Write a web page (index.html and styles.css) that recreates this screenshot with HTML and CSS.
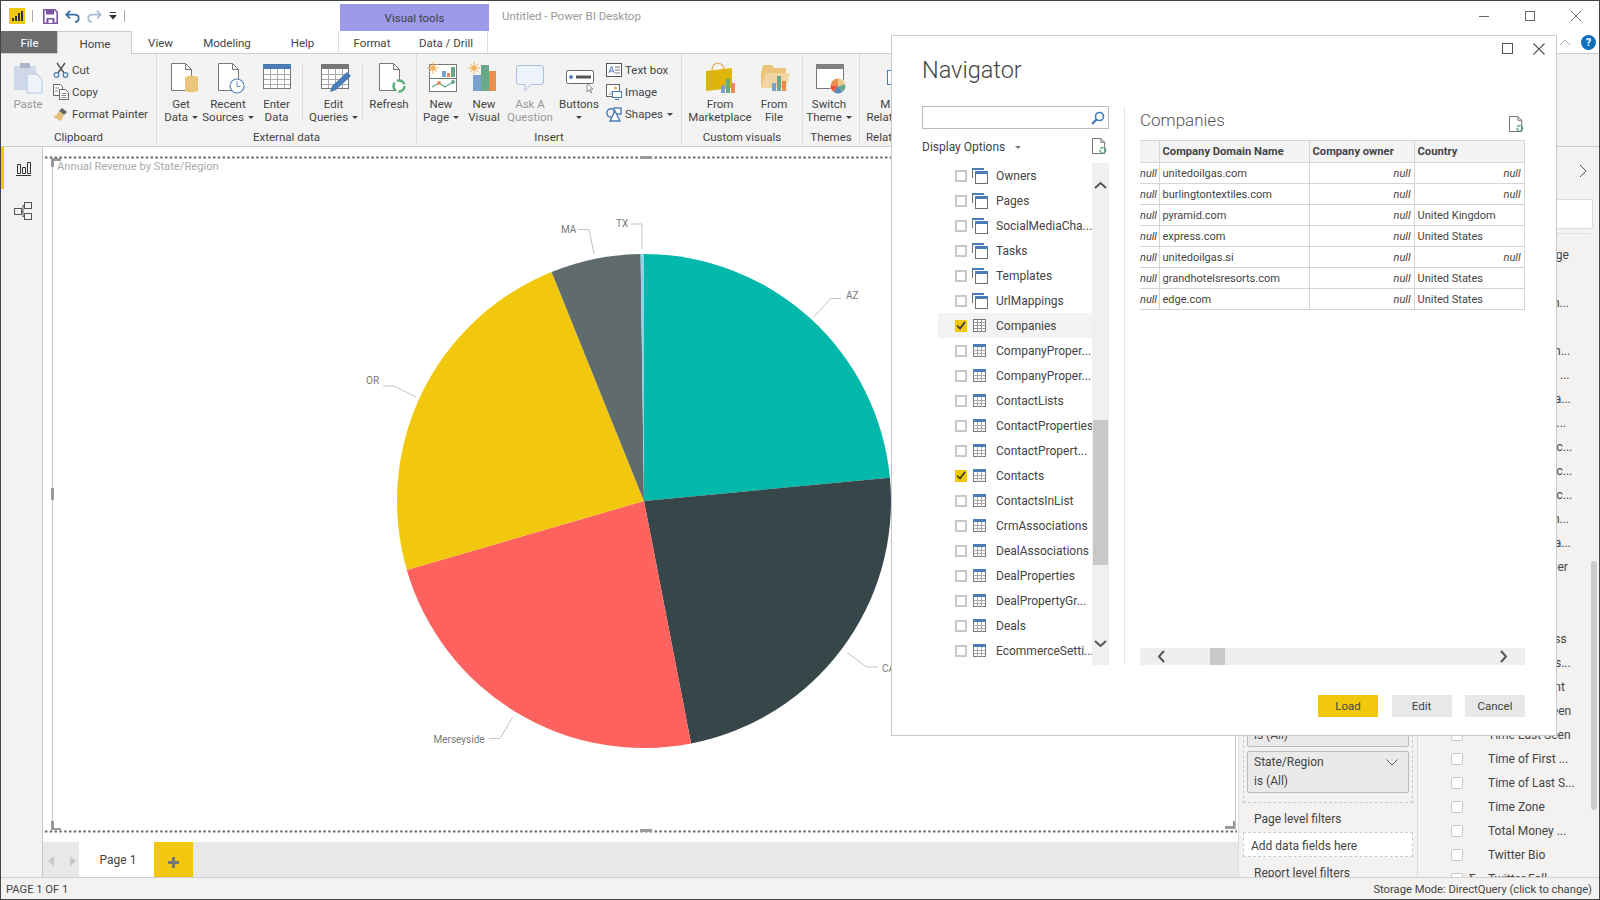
FILE: index.html
```html
<!DOCTYPE html>
<html lang="en">

<head>
    <meta charset="UTF-8">
    <title>Untitled - Power BI Desktop</title>
    <link rel="stylesheet" href="styles.css">
</head>

<body>
    <!-- shared small icons -->
    <svg class="sprite" width="0" height="0">
        <symbol id="ico-view" viewBox="0 0 16 16">
            <path d="M.5 10V.5h11" fill="none" stroke="#6d6d6d"/>
            <rect x="0" y="0" width="12" height="2" fill="#4a7db5"/>
            <rect x="3.5" y="3.5" width="12" height="12" fill="#fff" stroke="#6d6d6d"/>
            <rect x="3" y="3" width="13" height="3" fill="#4a7db5"/>
        </symbol>
        <symbol id="ico-table" viewBox="0 0 13 13">
            <rect x=".5" y=".5" width="12" height="12" fill="#fff" stroke="#777"/>
            <rect x="0" y="0" width="13" height="3" fill="#4a7db5"/>
            <path d="M.5 6.5h12M.5 9.5h12M4.5 3v10M8.5 3v10" stroke="#aaa" fill="none"/>
        </symbol>
        <symbol id="ico-table-sel" viewBox="0 0 13 13">
            <rect x=".5" y=".5" width="12" height="12" fill="#fff" stroke="#777"/>
            <path d="M.5 3.5h12M.5 6.5h12M.5 9.5h12M4.5 1v12M8.5 1v12" stroke="#999" fill="none"/>
        </symbol>
        <symbol id="ico-docrefresh" viewBox="0 0 16 18">
            <path d="M.5.5h9l4 4v12h-13z M9.5.5v4h4" fill="#fff" stroke="#666"/>
            <circle cx="11.5" cy="13" r="3" fill="none" stroke="#5bab7d" stroke-width="1.6" stroke-dasharray="4 1.4"/>
        </symbol>
        <symbol id="ico-doc" viewBox="0 0 32 34">
            <path d="M6.5 2.5h14l6 6v21h-20z M20.5 2.5v6h6" fill="#fff" stroke="#777"/>
        </symbol>
        <symbol id="ico-sun" viewBox="0 0 12 12">
            <circle cx="6" cy="6" r="2.6" fill="#eeb45f"/>
            <path d="M6 0v12M0 6h12M1.8 1.8l8.4 8.4M10.2 1.8l-8.4 8.4" stroke="#eeb45f"/>
        </symbol>
    </svg>

    <div class="window">
        <div class="titlebar">
            <div class="qat">
                <svg class="logo" width="16" height="16" viewBox="0 0 16 16">
                    <rect width="16" height="16" fill="#f2c80f"/>
                    <path d="M3 10h2v3H3zM6 8h2v5H6zM9 5h2v8H9zM12 3h2v10h-2z" fill="#333"/>
                </svg>
                <span class="qat-sep"></span>
                <svg width="15" height="15" viewBox="0 0 15 15">
                    <path d="M.8.8h11l2.4 2.4v11H.8z" fill="#fff" stroke="#7d55a5" stroke-width="1.6"/>
                    <path d="M3 1h8v4.500H3zM3.500 9h8v5h-8z" fill="#7d55a5"/>
                    <path d="M5.500 10.500h4V14h-4z" fill="#fff"/>
                </svg>
                <svg class="qat-arrow" width="15" height="13" viewBox="0 0 15 13">
                    <path d="M5 1L1.300 4.700 5 8.400M1.500 4.700h8c5.500 0 5.500 7 .5 7.300" fill="none" stroke="#3a6ea5" stroke-width="1.800"/>
                </svg>
                <svg class="qat-arrow" width="15" height="13" viewBox="0 0 15 13">
                    <path d="M10 1l3.700 3.700L10 8.400M13.500 4.700h-8c-5.500 0-5.500 7-.5 7.300" fill="none" stroke="#a9bdd3" stroke-width="1.800"/>
                </svg>
                <svg class="qat-drop" width="8" height="8" viewBox="0 0 8 8">
                    <path d="M1 0h6v1H1zM0 3h8L4 7.500z" fill="#333"/>
                </svg>
                <span class="qat-sep qat-sep-end"></span>
            </div>
            <div class="ctx-title">Visual tools</div>
            <div class="app-title">Untitled - Power BI Desktop</div>
            <div class="win-ctrls">
                <svg width="12" height="12" viewBox="0 0 12 12"><path d="M1 6.500h10" stroke="#666"/></svg>
                <svg width="12" height="12" viewBox="0 0 12 12"><rect x="1.500" y="1.500" width="9" height="9" fill="none" stroke="#666"/></svg>
                <svg width="12" height="12" viewBox="0 0 12 12"><path d="M1 1l10 10M11 1L1 11" stroke="#666"/></svg>
            </div>
        </div>

        <div class="tabs">
            <div class="tab tab-file">File</div>
            <div class="tab tab-home">Home</div>
            <div class="tab tab-view">View</div>
            <div class="tab tab-modeling">Modeling</div>
            <div class="tab tab-help">Help</div>
            <div class="tab tab-format">Format</div>
            <div class="tab tab-drill">Data / Drill</div>
            <div class="tabs-right">
                <svg width="12" height="8" viewBox="0 0 12 8"><path d="M1 7l5-5 5 5" fill="none" stroke="#aaa"/></svg>
                <div class="help-dot">?</div>
            </div>
        </div>

        <div class="ribbon">
            <div class="group group-clip">
                <div class="group-body">
                    <div class="rb rb-paste rb-off">
                        <svg width="32" height="34" viewBox="0 0 32 34">
                            <path d="M2 5h22v24H2z" fill="#cfd8e8"/>
                            <path d="M8 2h10v5H8z" fill="#a9b4c6"/>
                            <path d="M15 13h10l5 5v14H15z" fill="#eef3fb" stroke="#b8c7dc"/>
                        </svg>
                        <span>Paste</span>
                    </div>
                    <div class="small-col">
                        <div class="rs">
                            <svg width="16" height="16" viewBox="0 0 16 16">
                                <path d="M4 1l7 10M12 1L5 11" stroke="#555" stroke-width="1.400" fill="none"/>
                                <circle cx="3.500" cy="13" r="2.300" fill="none" stroke="#4a7db5" stroke-width="1.200"/>
                                <circle cx="12.500" cy="13" r="2.300" fill="none" stroke="#4a7db5" stroke-width="1.200"/>
                            </svg>
                            <span>Cut</span>
                        </div>
                        <div class="rs">
                            <svg width="16" height="16" viewBox="0 0 16 16">
                                <path d="M.5.500h7l2 2v9h-9z" fill="#fff" stroke="#666"/>
                                <path d="M6.500 5.500h6l3 3v7h-9z" fill="#fff" stroke="#666"/>
                                <path d="M2 4h4M2 7h3M8.500 9.500h5M8.500 11.500h5M8.500 13.500h5" stroke="#888"/>
                            </svg>
                            <span>Copy</span>
                        </div>
                        <div class="rs">
                            <svg width="16" height="16" viewBox="0 0 16 16">
                                <path d="M9 2l5 4-3 3-5-4z" fill="#666"/>
                                <path d="M6 5l5 4-3 6C5 14 2 12 0 10c3 0 5-2 6-5z" fill="#e3bf7c"/>
                            </svg>
                            <span>Format Painter</span>
                        </div>
                    </div>
                </div>
                <div class="group-label">Clipboard</div>
            </div>

            <div class="group group-ext">
                <div class="group-body">
                    <div class="rb w48">
                        <svg width="32" height="34" viewBox="0 0 32 34">
                            <use href="#ico-doc"/>
                            <path d="M20 17c0-3 13-3 13 0v12c0 3-13 3-13 0z" fill="#ecc47c"/>
                        </svg>
                        <span>Get<br>Data <i class="caret"></i></span>
                    </div>
                    <div class="rb w46">
                        <svg width="32" height="34" viewBox="0 0 32 34">
                            <use href="#ico-doc"/>
                            <circle cx="25" cy="25" r="7" fill="#fff" stroke="#5487bd" stroke-width="1.200"/>
                            <path d="M25 20.500V25.500h3.500" fill="none" stroke="#5487bd"/>
                        </svg>
                        <span>Recent<br>Sources <i class="caret"></i></span>
                    </div>
                    <div class="rb w51">
                        <svg width="32" height="34" viewBox="0 0 32 34">
                            <rect x="2.500" y="3.500" width="27" height="24" fill="#fff" stroke="#777"/>
                            <rect x="2" y="3" width="28" height="5" fill="#4a7db5"/>
                            <path d="M3 13.500h26M3 18.500h26M3 23.500h26M9.500 8v19M16.500 8v19M23.500 8v19" stroke="#aaa"/>
                        </svg>
                        <span>Enter<br>Data</span>
                    </div>
                    <span class="rsep"></span>
                    <div class="rb w57">
                        <svg width="32" height="34" viewBox="0 0 32 34">
                            <rect x="3.500" y="3.500" width="27" height="24" fill="#fff" stroke="#777"/>
                            <rect x="3" y="3" width="28" height="5" fill="#777"/>
                            <path d="M4 13.500h26M4 18.500h26M4 23.500h26M10.500 8v19M17.500 8v19M24.500 8v19" stroke="#aaa"/>
                            <path d="M12 31l2-6 15-14 4 4-15 14z" fill="#4a7db5"/>
                        </svg>
                        <span>Edit<br>Queries <i class="caret"></i></span>
                    </div>
                    <span class="rsep"></span>
                    <div class="rb w48">
                        <svg width="32" height="34" viewBox="0 0 32 34">
                            <use href="#ico-doc"/>
                            <circle cx="26" cy="25" r="5.500" fill="#fff" stroke="#5bab7d" stroke-width="2.400" stroke-dasharray="9 2.500"/>
                        </svg>
                        <span>Refresh</span>
                    </div>
                </div>
                <div class="group-label">External data</div>
            </div>

            <div class="group group-ins">
                <div class="group-body">
                    <div class="rb w48">
                        <svg width="32" height="34" viewBox="0 0 32 34">
                            <rect x="4.500" y="3.500" width="27" height="27" fill="#fff" stroke="#777"/>
                            <path d="M4 17.500h28" stroke="#777"/>
                            <path d="M17 10h4v6h-4z" fill="#7aa0cf"/>
                            <path d="M22 12h3v4h-3z" fill="#e98e4d"/>
                            <path d="M26 6h4v10h-4z" fill="#6aa88a"/>
                            <path d="M7 26l7-4 6 4 8-5" fill="none" stroke="#6aa88a" stroke-width="1.400"/>
                            <circle cx="14" cy="22" r="2" fill="#e98e4d"/>
                            <circle cx="28" cy="21" r="2" fill="#6aa88a"/>
                            <use href="#ico-sun" x="2" y="1" width="12" height="12"/>
                        </svg>
                        <span>New<br>Page <i class="caret"></i></span>
                    </div>
                    <div class="rb w38">
                        <svg width="32" height="34" viewBox="0 0 32 34">
                            <use href="#ico-sun" x="0" y="1" width="12" height="12"/>
                            <path d="M5 14h8v16H5z" fill="#7aa0cf"/>
                            <path d="M13 4h8v26h-8z" fill="#6aa88a"/>
                            <path d="M21 10h7v20h-7z" fill="#e98e4d"/>
                        </svg>
                        <span>New<br>Visual</span>
                    </div>
                    <div class="rb w54 rb-off">
                        <svg width="32" height="34" viewBox="0 0 32 34">
                            <path d="M5 4.500h22c1.500 0 2.500 1 2.500 2.500v14c0 1.500-1 2.500-2.500 2.500H17l-6 6v-6H5c-1.500 0-2.500-1-2.500-2.500V7c0-1.500 1-2.500 2.500-2.500z" fill="#eef3fb" stroke="#a9c0dc"/>
                        </svg>
                        <span>Ask A<br>Question</span>
                    </div>
                    <div class="rb w44">
                        <svg width="32" height="34" viewBox="0 0 32 34">
                            <rect x="3.500" y="9.500" width="27" height="13" rx="2" fill="#fff" stroke="#666"/>
                            <circle cx="8" cy="16" r="2" fill="#5487bd"/>
                            <path d="M13 14.500h15v3H13z" fill="#555"/>
                            <path d="M24 22l0 9 2-2 2 3 1-1-2-3 3 0z" fill="#fff" stroke="#777" stroke-width=".8"/>
                        </svg>
                        <span>Buttons<br><i class="caret"></i></span>
                    </div>
                    <div class="small-col small-ins">
                        <div class="rs">
                            <svg width="16" height="14" viewBox="0 0 16 14">
                                <rect x=".5" y=".5" width="15" height="13" fill="#fff" stroke="#555"/>
                                <path d="M3 10l2.500-7L8 10M4 8h3" fill="none" stroke="#4a7db5"/>
                                <path d="M9 4h5M9 7h5M9 10h5" stroke="#777"/>
                            </svg>
                            <span>Text box</span>
                        </div>
                        <div class="rs">
                            <svg width="16" height="16" viewBox="0 0 16 16">
                                <rect x=".5" y=".5" width="13" height="12" fill="#fff" stroke="#666"/>
                                <circle cx="9.500" cy="4" r="1.500" fill="#e9a94f"/>
                                <path d="M2 11l3-4 3 4z" fill="#c3cfdf"/>
                                <rect x="6.500" y="7.500" width="9" height="6" fill="#fff" stroke="#4a7db5"/>
                                <path d="M9 15.500h4" stroke="#4a7db5"/>
                            </svg>
                            <span>Image</span>
                        </div>
                        <div class="rs">
                            <svg width="16" height="15" viewBox="0 0 16 15">
                                <circle cx="5" cy="6" r="4.200" fill="none" stroke="#4a7db5" stroke-width="1.400"/>
                                <rect x="8" y="1" width="7" height="6" fill="#fff" stroke="#4a7db5" stroke-width="1.400"/>
                                <path d="M9 4l5 10H4z" fill="#fff" stroke="#4a7db5" stroke-width="1.400"/>
                            </svg>
                            <span>Shapes <i class="caret"></i></span>
                        </div>
                    </div>
                </div>
                <div class="group-label">Insert</div>
            </div>

            <div class="group group-custom">
                <div class="group-body">
                    <div class="rb w76">
                        <svg width="32" height="34" viewBox="0 0 32 34">
                            <path d="M8 9c0-9 12-9 12 0" fill="none" stroke="#e9a94f" stroke-width="1.200"/>
                            <path d="M2 10l26-3v20l-26 3z" fill="#dcb50d"/>
                            <path d="M17 24h4v8h-4z" fill="#7aa0cf"/>
                            <path d="M22 18h4v14h-4z" fill="#6aa88a"/>
                            <path d="M27 22h4v10h-4z" fill="#e98e4d"/>
                        </svg>
                        <span>From<br>Marketplace</span>
                    </div>
                    <div class="rb w32">
                        <svg width="32" height="34" viewBox="0 0 32 34">
                            <path d="M3 12l2-8h9l2 3h12v20H3z" fill="#ecc47c"/>
                            <path d="M3 27l5-15h24l-4 15z" fill="#f1d6a2"/>
                            <path d="M14 22h4v8h-4z" fill="#7aa0cf"/>
                            <path d="M19 15h4v15h-4z" fill="#6aa88a"/>
                            <path d="M24 20h4v10h-4z" fill="#e98e4d"/>
                        </svg>
                        <span>From<br>File</span>
                    </div>
                </div>
                <div class="group-label">Custom visuals</div>
            </div>

            <div class="group group-themes">
                <div class="group-body">
                    <div class="rb w52">
                        <svg width="32" height="34" viewBox="0 0 32 34">
                            <rect x="3.500" y="3.500" width="27" height="24" fill="#fff" stroke="#777"/>
                            <rect x="3" y="3" width="28" height="5" fill="#808080"/>
                            <circle cx="25" cy="25" r="8" fill="#fff"/>
                            <path d="M25 25l0-7.500a7.500 7.500 0 0 1 7.300 6z" fill="#e9c98c"/>
                            <path d="M25 25l7.300-1.500a7.500 7.500 0 0 1-3 7.500z" fill="#6aa88a"/>
                            <path d="M25 25l4.300 6a7.500 7.500 0 0 1-8.600 0z" fill="#5487bd"/>
                            <path d="M25 25l-4.300 6a7.500 7.500 0 0 1-3.200-6z" fill="#e8553f"/>
                            <path d="M25 25h-7.500a7.500 7.500 0 0 1 7.500-7.500z" fill="#e98e4d"/>
                        </svg>
                        <span>Switch<br>Theme <i class="caret"></i></span>
                    </div>
                </div>
                <div class="group-label">Themes</div>
            </div>

            <div class="group group-rel">
                <div class="group-body">
                    <div class="rb rb-rel">
                        <svg width="32" height="34" viewBox="0 0 32 34">
                            <rect x="2.500" y="9.500" width="14" height="14" fill="#fff" stroke="#4a7db5"/>
                        </svg>
                        <span>Manage<br>Relationships</span>
                    </div>
                </div>
                <div class="group-label group-label-rel">Relationships</div>
            </div>
        </div>

        <div class="main">
            <div class="sidebar">
                <div class="side-item side-active">
                    <svg width="15" height="15" viewBox="0 0 15 15">
                        <path d="M0 14.500h15" stroke="#333"/>
                        <path d="M1.500 3.500h3v9h-3zM6.500 6.500h3v6h-3zM11.500 1.500h3v11h-3z" fill="none" stroke="#333"/>
                    </svg>
                </div>
                <div class="side-item side-model">
                    <svg width="19" height="19" viewBox="0 0 19 19">
                        <rect x="10.500" y=".5" width="7" height="6" fill="none" stroke="#555"/>
                        <rect x=".5" y="6.500" width="7" height="6" fill="none" stroke="#555"/>
                        <rect x="10.500" y="11.500" width="7" height="6" fill="none" stroke="#555"/>
                        <path d="M7.500 9.500h1.500M9 3.500V15M9 3.500h1.500M9 14.500h1.500" stroke="#555" fill="none"/>
                    </svg>
                </div>
            </div>

            <div class="report">
                <div class="canvas">
                    <svg class="chart" viewBox="43 147 1194 695">
                        <path d="M45 157.500H1237M45 831.500H1237" stroke="#666" stroke-width="2" stroke-dasharray="2.400 2.400"/>
                        <path d="M52.500 160V830" stroke="#c4c4c4"/>
                        <path d="M1235.500 160V830" stroke="#c4c4c4"/>
                        <path d="M51 158h10v3h-7v6h-3z M51 821h3v7h7v2h-10z" fill="#999"/>
                        <path d="M1233 821h2v-1h0v9h-10v-3h8z" fill="#999"/>
                        <path d="M640 156h12v3h-12zM640 829h12v3h-12zM51 488h3v12h-3z" fill="#999"/>
                        <text class="vis-title" x="57" y="170">Annual Revenue by State/Region</text>

                        <path d="M644 501L644 254A247 247 0 0 1 889.900 477.800Z" fill="#01b8aa"/>
                        <path d="M644 501L889.900 477.800A247 247 0 0 1 691.100 743.500Z" fill="#374649"/>
                        <path d="M644 501L691.100 743.500A247 247 0 0 1 406.800 569.900Z" fill="#fd625e"/>
                        <path d="M644 501L406.800 569.900A247 247 0 0 1 551.600 272.000Z" fill="#f2c80f"/>
                        <path d="M644 501L551.600 272.000A247 247 0 0 1 640.600 254Z" fill="#5f6b6d"/>
                        <path d="M644 501L640.600 254A247 247 0 0 1 644 254Z" fill="#8ad4eb"/>

                        <g class="leaders">
                            <path d="M841 298.500H830.500L814 317"/>
                            <path d="M383 386H394L416 397"/>
                            <path d="M578 229.500H589L594 254"/>
                            <path d="M631 224H642V249"/>
                            <path d="M489 738.500H500L512.500 717.500"/>
                            <path d="M847 652.500L866.500 667H878"/>
                        </g>
                        <text class="slice-label" x="846" y="299">AZ</text>
                        <text class="slice-label" x="366" y="384">OR</text>
                        <text class="slice-label" x="561" y="233">MA</text>
                        <text class="slice-label" x="616" y="227">TX</text>
                        <text class="slice-label" x="433.500" y="743">Merseyside</text>
                        <text class="slice-label" x="882" y="672">CA</text>
                    </svg>
                </div>
                <div class="pagebar">
                    <div class="page-arrows">
                        <svg width="7" height="10" viewBox="0 0 7 10"><path d="M6 0v10L0 5z" fill="#c8c8c8"/></svg>
                        <svg width="7" height="10" viewBox="0 0 7 10"><path d="M1 0v10l6-5z" fill="#c8c8c8"/></svg>
                    </div>
                    <div class="page-tab">Page 1</div>
                    <div class="page-add">
                        <svg width="11" height="11" viewBox="0 0 11 11"><path d="M4 0h3v4h4v3H7v4H4V7H0V4h4z" fill="#777"/></svg>
                    </div>
                </div>
            </div>

            <div class="side-panes">
                <div class="filters">
                    <div class="filter-wrap">
                        <div class="filter-box">
                            <div>Contact Owner</div>
                            <div>is (All)</div>
                        </div>
                        <div class="filter-box">
                            <div class="filter-name">State/Region
                                <svg width="12" height="7" viewBox="0 0 12 7"><path d="M.5.500L6 6l5.500-5.500" fill="none" stroke="#666"/></svg>
                            </div>
                            <div>is (All)</div>
                        </div>
                    </div>
                    <div class="filter-head">Page level filters</div>
                    <div class="filter-drop">Add data fields here</div>
                    <div class="filter-head">Report level filters</div>
                </div>

                <div class="fields">
                    <div class="fields-head">
                        <svg width="9" height="14" viewBox="0 0 9 14"><path d="M1 1l6 6-6 6" fill="none" stroke="#555"/></svg>
                    </div>
                    <div class="fields-search"></div>
                    <div class="fields-list">
                        <div class="field"><i class="fbox"></i><b></b><span>Lifecycle Stage</span></div>
                        <div class="field"><i class="fbox"></i><b></b><span>Lead Type</span></div>
                        <div class="field"><i class="fbox"></i><b></b><span>Original Chan...</span></div>
                        <div class="field"><i class="fbox"></i><b></b><span>Last Name</span></div>
                        <div class="field"><i class="fbox"></i><b></b><span>Recent Touch...</span></div>
                        <div class="field"><i class="fbox"></i><b></b><span>Recent Sales ...</span></div>
                        <div class="field"><i class="fbox"></i><b></b><span>Revenue Data...</span></div>
                        <div class="field"><i class="fbox"></i><b></b><span>Sales Analyti...</span></div>
                        <div class="field"><i class="fbox"></i><b></b><span>Original Sourc...</span></div>
                        <div class="field"><i class="fbox"></i><b></b><span>Original Sourc...</span></div>
                        <div class="field"><i class="fbox"></i><b></b><span>Original Sourc...</span></div>
                        <div class="field"><i class="fbox"></i><b></b><span>Original Chan...</span></div>
                        <div class="field"><i class="fbox"></i><b></b><span>Revenue Data...</span></div>
                        <div class="field"><i class="fbox"></i><b></b><span>Phone Number</span></div>
                        <div class="field"><i class="fbox"></i><b></b><span>Role</span></div>
                        <div class="field"><i class="fbox"></i><b></b><span>State</span></div>
                        <div class="field"><i class="fbox"></i><b></b><span>Street Address</span></div>
                        <div class="field"><i class="fbox"></i><b></b><span>Subscriptions...</span></div>
                        <div class="field"><i class="fbox"></i><b></b><span>Support Agent</span></div>
                        <div class="field"><i class="fbox"></i><b></b><span>Time First Seen</span></div>
                        <div class="field"><i class="fbox"></i><b></b><span>Time Last Seen</span></div>
                        <div class="field"><i class="fbox"></i><b></b><span>Time of First ...</span></div>
                        <div class="field"><i class="fbox"></i><b></b><span>Time of Last S...</span></div>
                        <div class="field"><i class="fbox"></i><b></b><span>Time Zone</span></div>
                        <div class="field"><i class="fbox"></i><b></b><span>Total Money ...</span></div>
                        <div class="field"><i class="fbox"></i><b></b><span>Twitter Bio</span></div>
                        <div class="field"><i class="fbox"></i><b>&Sigma;</b><span>Twitter Foll...</span></div>
                    </div>
                </div>
                <div class="pane-scroll"><div class="pane-thumb"></div></div>
            </div>
        </div>

        <div class="statusbar">
            <span>PAGE 1 OF 1</span>
            <span>Storage Mode: DirectQuery (click to change)</span>
        </div>
    </div>

    <!-- Navigator dialog -->
    <div class="dialog">
        <div class="dlg-head">
            <h1>Navigator</h1>
            <div class="dlg-ctrls">
                <svg width="11" height="11" viewBox="0 0 11 11"><rect x=".5" y=".5" width="10" height="10" fill="none" stroke="#555"/></svg>
                <svg width="12" height="12" viewBox="0 0 12 12"><path d="M.5.500l11 11M11.500.500l-11 11" stroke="#555" stroke-width="1.100"/></svg>
            </div>
        </div>

        <div class="dlg-body">
            <div class="nav-left">
                <div class="nav-search">
                    <svg width="14" height="14" viewBox="0 0 14 14">
                        <circle cx="8.500" cy="5.500" r="4" fill="none" stroke="#3f7cb5" stroke-width="1.600"/>
                        <path d="M5.500 8.500L1 13" stroke="#3f7cb5" stroke-width="2.200"/>
                    </svg>
                </div>
                <div class="nav-options">
                    <span>Display Options <i class="caret caret-wide"></i></span>
                    <svg width="15" height="17" viewBox="0 0 16 18"><use href="#ico-docrefresh"/></svg>
                </div>
                <div class="nav-tree">
                    <div class="tree-list">
                        <div class="tree-row"><i class="chk"></i><svg width="16" height="16"><use href="#ico-view"/></svg><span>Owners</span></div>
                        <div class="tree-row"><i class="chk"></i><svg width="16" height="16"><use href="#ico-view"/></svg><span>Pages</span></div>
                        <div class="tree-row"><i class="chk"></i><svg width="16" height="16"><use href="#ico-view"/></svg><span>SocialMediaCha...</span></div>
                        <div class="tree-row"><i class="chk"></i><svg width="16" height="16"><use href="#ico-view"/></svg><span>Tasks</span></div>
                        <div class="tree-row"><i class="chk"></i><svg width="16" height="16"><use href="#ico-view"/></svg><span>Templates</span></div>
                        <div class="tree-row"><i class="chk"></i><svg width="16" height="16"><use href="#ico-view"/></svg><span>UrlMappings</span></div>
                        <div class="tree-row row-hl"><i class="chk chk-on"><svg width="10" height="9" viewBox="0 0 10 9"><path d="M1 4.500l3 3 5-6.500" fill="none" stroke="#333" stroke-width="1.600"/></svg></i><svg class="tbl" width="13" height="13"><use href="#ico-table-sel"/></svg><span>Companies</span></div>
                        <div class="tree-row"><i class="chk"></i><svg class="tbl" width="13" height="13"><use href="#ico-table"/></svg><span>CompanyProper...</span></div>
                        <div class="tree-row"><i class="chk"></i><svg class="tbl" width="13" height="13"><use href="#ico-table"/></svg><span>CompanyProper...</span></div>
                        <div class="tree-row"><i class="chk"></i><svg class="tbl" width="13" height="13"><use href="#ico-table"/></svg><span>ContactLists</span></div>
                        <div class="tree-row"><i class="chk"></i><svg class="tbl" width="13" height="13"><use href="#ico-table"/></svg><span>ContactProperties</span></div>
                        <div class="tree-row"><i class="chk"></i><svg class="tbl" width="13" height="13"><use href="#ico-table"/></svg><span>ContactPropert...</span></div>
                        <div class="tree-row"><i class="chk chk-on"><svg width="10" height="9" viewBox="0 0 10 9"><path d="M1 4.500l3 3 5-6.500" fill="none" stroke="#333" stroke-width="1.600"/></svg></i><svg class="tbl" width="13" height="13"><use href="#ico-table"/></svg><span>Contacts</span></div>
                        <div class="tree-row"><i class="chk"></i><svg class="tbl" width="13" height="13"><use href="#ico-table"/></svg><span>ContactsInList</span></div>
                        <div class="tree-row"><i class="chk"></i><svg class="tbl" width="13" height="13"><use href="#ico-table"/></svg><span>CrmAssociations</span></div>
                        <div class="tree-row"><i class="chk"></i><svg class="tbl" width="13" height="13"><use href="#ico-table"/></svg><span>DealAssociations</span></div>
                        <div class="tree-row"><i class="chk"></i><svg class="tbl" width="13" height="13"><use href="#ico-table"/></svg><span>DealProperties</span></div>
                        <div class="tree-row"><i class="chk"></i><svg class="tbl" width="13" height="13"><use href="#ico-table"/></svg><span>DealPropertyGr...</span></div>
                        <div class="tree-row"><i class="chk"></i><svg class="tbl" width="13" height="13"><use href="#ico-table"/></svg><span>Deals</span></div>
                        <div class="tree-row"><i class="chk"></i><svg class="tbl" width="13" height="13"><use href="#ico-table"/></svg><span>EcommerceSetti...</span></div>
                    </div>
                    <div class="vscroll">
                        <svg class="vs-up" width="13" height="8" viewBox="0 0 13 8"><path d="M1 7l5.500-5L12 7" fill="none" stroke="#555" stroke-width="2"/></svg>
                        <div class="vs-thumb"></div>
                        <svg class="vs-down" width="13" height="8" viewBox="0 0 13 8"><path d="M1 1l5.500 5L12 1" fill="none" stroke="#555" stroke-width="2"/></svg>
                    </div>
                </div>
            </div>

            <div class="nav-right">
                <div class="preview-head">
                    <h2>Companies</h2>
                    <svg width="15" height="17" viewBox="0 0 16 18"><use href="#ico-docrefresh"/></svg>
                </div>
                <table class="preview">
                    <thead>
                        <tr><th class="c0"></th><th class="c1">Company Domain Name</th><th class="c2">Company owner</th><th class="c3">Country</th></tr>
                    </thead>
                    <tbody>
                        <tr><td class="nul">null</td><td>unitedoilgas.com</td><td class="nul">null</td><td class="nul">null</td></tr>
                        <tr><td class="nul">null</td><td>burlingtontextiles.com</td><td class="nul">null</td><td class="nul">null</td></tr>
                        <tr><td class="nul">null</td><td>pyramid.com</td><td class="nul">null</td><td>United Kingdom</td></tr>
                        <tr><td class="nul">null</td><td>express.com</td><td class="nul">null</td><td>United States</td></tr>
                        <tr><td class="nul">null</td><td>unitedoilgas.si</td><td class="nul">null</td><td class="nul">null</td></tr>
                        <tr><td class="nul">null</td><td>grandhotelsresorts.com</td><td class="nul">null</td><td>United States</td></tr>
                        <tr><td class="nul">null</td><td>edge.com</td><td class="nul">null</td><td>United States</td></tr>
                    </tbody>
                </table>
                <div class="hscroll">
                    <svg class="hs-left" width="8" height="13" viewBox="0 0 8 13"><path d="M7 1L2 6.500 7 12" fill="none" stroke="#555" stroke-width="2"/></svg>
                    <div class="hs-thumb"></div>
                    <svg class="hs-right" width="8" height="13" viewBox="0 0 8 13"><path d="M1 1l5 5.500L1 12" fill="none" stroke="#555" stroke-width="2"/></svg>
                </div>
            </div>
        </div>

        <div class="dlg-foot">
            <button type="button" class="btn btn-load">Load</button>
            <button type="button" class="btn">Edit</button>
            <button type="button" class="btn">Cancel</button>
        </div>
    </div>
</body>

</html>
```

FILE: styles.css
```css
* {
    box-sizing: border-box;
}

html,
body {
    margin: 0;
    height: 100%;
    overflow: hidden;
}

body {
    font-family: Roboto, "Noto Sans", sans-serif;
    font-size: 11.5px;
    color: #444;
    background-color: #fff;
}

.sprite {
    position: absolute;
}

svg {
    flex: none;
}

.window {
    width: 1600px;
    height: 900px;
    display: flex;
    flex-direction: column;
    border: 1px solid #444;
}

/* title bar */
.titlebar {
    height: 30px;
    flex: none;
    display: flex;
    background-color: #fff;
}

.qat {
    width: 339px;
    display: flex;
    align-items: center;
    padding-left: 8px;
}

.qat-sep {
    width: 1px;
    height: 12px;
    margin: 0 10px 0 7px;
    background-color: #aaa;
}

.qat-sep-end {
    margin-left: 7px;
}

.qat-arrow {
    margin-left: 7px;
}

.qat-drop {
    margin-left: 7px;
}

.ctx-title {
    width: 149px;
    height: 27px;
    margin-top: 3px;
    background-color: #9b9bea;
    color: #404040;
    text-align: center;
    line-height: 28px;
}

.app-title {
    margin-left: 13px;
    line-height: 30px;
    color: #999;
}

.win-ctrls {
    margin-left: auto;
    display: flex;
    gap: 34px;
    padding: 9px 17px 0 0;
    height: 24px;
}

/* ribbon tabs */
.tabs {
    height: 23px;
    flex: none;
    display: flex;
    border-bottom: 1px solid #ccc;
    background-color: #fff;
}

.tab {
    padding-left: 1px;
    text-align: center;
    line-height: 24px;
}

.tab-file {
    width: 56px;
    background-color: #6b6b6b;
    color: #fff;
}

.tab-home {
    width: 75px;
    height: 23px;
    border: 1px solid #ccc;
    border-bottom: none;
    background-color: #f3f3f3;
}

.tab-view {
    width: 56px;
}

.tab-modeling {
    width: 78px;
    padding-left: 0;
}

.tab-help {
    width: 72px;
}

.tab-format {
    width: 66px;
    border-left: 1px solid #ddd;
}

.tab-drill {
    width: 84px;
    border-right: 1px solid #ddd;
}

.tabs-right {
    margin-left: auto;
    display: flex;
    align-items: center;
    gap: 10px;
    padding-right: 3px;
    height: 22px;
}

.help-dot {
    width: 15px;
    height: 15px;
    border-radius: 50%;
    background-color: #106ebe;
    color: #fff;
    font-weight: bold;
    font-size: 11px;
    line-height: 15px;
    text-align: center;
}

/* ribbon */
.ribbon {
    height: 93px;
    flex: none;
    display: flex;
    background-color: #f3f3f3;
    border-bottom: 1px solid #ccc;
}

.group {
    display: flex;
    flex-direction: column;
    border-right: 1px solid #ddd;
    margin-bottom: 2px;
}

.group-clip {
    width: 156px;
}

.group-ext {
    width: 260px;
}

.group-ins {
    width: 265px;
}

.group-custom {
    width: 121px;
}

.group-themes {
    width: 57px;
}

.group-rel {
    width: 90px;
    border-right: none;
}

.group-body {
    height: 75px;
    flex: none;
    display: flex;
}

.group-label {
    text-align: center;
    line-height: 15px;
    margin-top: 1px;
}

.group-label-rel {
    text-align: left;
    padding-left: 6px;
}

.rb {
    display: flex;
    flex-direction: column;
    align-items: center;
    padding-top: 7px;
    text-align: center;
    line-height: 13px;
    white-space: nowrap;
}

.rb svg {
    height: 34px;
    margin-bottom: 3px;
    overflow: visible;
}

.rb-off {
    color: #999;
}

.rb-paste {
    width: 52px;
    padding-left: 2px;
}

.rb-rel {
    width: 82px;
}

.w32 { width: 32px; }
.w38 { width: 38px; }
.w44 { width: 44px; }
.w46 { width: 46px; }
.w48 { width: 48px; }
.w51 { width: 51px; }
.w52 { width: 52px; }
.w54 { width: 54px; }
.w57 { width: 57px; }
.w76 { width: 76px; }

.rsep {
    width: 1px;
    height: 56px;
    margin: 10px 2px 0 0;
    background-color: #ddd;
}

.small-col {
    display: flex;
    flex-direction: column;
    padding-top: 5px;
}

.small-ins {
    margin-left: 5px;
}

.rs {
    height: 22px;
    display: flex;
    align-items: center;
    gap: 3px;
    white-space: nowrap;
}

.caret {
    display: inline-block;
    vertical-align: middle;
    border: 3px solid transparent;
    border-top: 3px solid #444;
    border-bottom: none;
    margin-left: 1px;
}

.caret-wide {
    margin-left: 7px;
    border-width: 3px;
    border-bottom: none;
    border-top-color: #777;
}

/* main area */
.main {
    flex: 1;
    min-height: 0;
    display: flex;
}

.sidebar {
    width: 42px;
    background-color: #f3f2f1;
    border-right: 1px solid #c8c8c8;
}

.side-item {
    height: 42px;
    display: flex;
    align-items: center;
    justify-content: center;
    border-left: 3px solid transparent;
}

.side-active {
    border-left-color: #f2c80f;
}

.side-model {
    margin-top: 1px;
}

.report {
    width: 1195px;
    display: flex;
    flex-direction: column;
}

.canvas {
    height: 695px;
    flex: none;
    background-color: #fff;
}

.chart {
    display: block;
    width: 1194px;
    height: 695px;
}

.vis-title {
    font-size: 11.2px;
    fill: #aaa;
}

.leaders path {
    fill: none;
    stroke: #c4c4c4;
}

.slice-label {
    font-family: Roboto, sans-serif;
    font-size: 10px;
    fill: #777;
}

.pagebar {
    flex: 1;
    display: flex;
    background-color: #e8e8e8;
}

.page-arrows {
    width: 36px;
    display: flex;
    align-items: center;
    gap: 14px;
    padding-left: 5px;
}

.page-tab {
    width: 75px;
    padding-left: 3px;
    background-color: #fff;
    border-bottom: 2px solid #f2c80f;
    font-size: 12px;
    text-align: center;
    line-height: 36px;
}

.page-add {
    width: 39px;
    background-color: #f2c80f;
    display: flex;
    align-items: center;
    justify-content: center;
    padding-top: 2px;
}

/* filters and fields panes */
.side-panes {
    flex: 1;
    display: flex;
    background-color: #f3f2f1;
    overflow: hidden;
}

.filters {
    width: 180px;
    padding-top: 553px;
    border-right: 1px solid #ddd;
    border-left: 1px solid #ddd;
    font-size: 12px;
}

.filter-wrap {
    height: 103px;
    margin: 0 4px;
    padding: 5px 3px 0;
    border: 1px dashed #ccc;
    border-top: none;
}

.filter-box {
    height: 42px;
    margin-bottom: 4px;
    padding: 1px 6px;
    background-color: #ebeaea;
    border: 1px solid #bbb;
    border-radius: 2px;
    line-height: 19px;
}

.filter-name {
    display: flex;
    justify-content: space-between;
    align-items: center;
    padding-right: 4px;
}

.filter-head {
    height: 29px;
    padding-left: 15px;
    line-height: 32px;
}

.filter-drop {
    height: 25px;
    margin: 0 4px;
    padding-left: 7px;
    background-color: #fff;
    border: 1px dashed #ccc;
    line-height: 27px;
}

.fields {
    width: 173px;
    display: flex;
    flex-direction: column;
    font-size: 12px;
}

.fields-head {
    height: 52px;
    flex: none;
    display: flex;
    justify-content: flex-end;
    padding: 17px 3px 0 0;
}

.fields-search {
    height: 30px;
    flex: none;
    width: 175px;
    margin-bottom: 4px;
    background-color: #fff;
    border: 1px solid #ddd;
    border-radius: 2px;
}

.fields-list {
    flex: none;
    border-top: 1px solid #e0e0e0;
    padding-top: 9px;
    padding-left: 33px;
}

.field {
    height: 24px;
    display: flex;
    align-items: center;
    white-space: nowrap;
}

.fbox {
    width: 12px;
    height: 12px;
    background-color: #fff;
    border: 1px solid #c8c8c8;
    border-radius: 2px;
    flex: none;
}

.field b {
    width: 25px;
    flex: none;
    padding-left: 6px;
    font-weight: normal;
}

.pane-scroll {
    width: 8px;
    padding-top: 414px;
}

.pane-thumb {
    width: 6px;
    height: 249px;
    border-radius: 3px;
    background-color: #ccc;
}

.statusbar {
    height: 22px;
    flex: none;
    display: flex;
    justify-content: space-between;
    align-items: center;
    padding: 1px 7px 0 5px;
    background-color: #f3f2f1;
    border-top: 1px solid #d0d0d0;
    font-size: 11.2px;
}

/* navigator dialog, floats over the report */
.dialog {
    position: absolute;
    left: 891px;
    top: 35px;
    width: 666px;
    height: 701px;
    display: flex;
    flex-direction: column;
    background-color: #fff;
    border: 1px solid #c8c8c8;
}

.dlg-head {
    height: 70px;
    flex: none;
    display: flex;
    justify-content: space-between;
    padding-left: 30px;
}

.dlg-head h1 {
    margin: 14px 0 0;
    font-size: 23.5px;
    font-weight: 300;
    line-height: 40px;
    color: #444;
}

.dlg-ctrls {
    display: flex;
    align-items: flex-start;
    gap: 20px;
    padding: 7px 11px 0 0;
}

.dlg-body {
    height: 559px;
    flex: none;
    display: flex;
    padding-left: 30px;
}

.nav-left {
    width: 187px;
    display: flex;
    flex-direction: column;
}

.nav-search {
    height: 23px;
    flex: none;
    display: flex;
    align-items: center;
    justify-content: flex-end;
    padding-right: 3px;
    border: 1px solid #bbb;
}

.nav-options {
    height: 34px;
    flex: none;
    display: flex;
    justify-content: space-between;
    align-items: center;
    padding: 1px 2px 0 0;
    font-size: 12px;
}

.nav-tree {
    flex: 1;
    min-height: 0;
    display: flex;
    padding-left: 16px;
}

.tree-list {
    width: 154px;
}

.tree-row {
    height: 25px;
    display: flex;
    align-items: center;
    padding-left: 17px;
    font-size: 12px;
    white-space: nowrap;
}

.tree-row span {
    margin-left: 8px;
}

.tree-row .tbl {
    margin: 0 2px 0 1px;
}

.row-hl {
    background-color: #f3f3f3;
}

.chk {
    width: 12px;
    height: 12px;
    flex: none;
    margin-right: 5px;
    border: 2px solid #c8c8c8;
    background-color: #fff;
    display: flex;
    align-items: center;
    justify-content: center;
}

.chk-on {
    border: none;
    background-color: #f2c80f;
}

.vscroll {
    width: 17px;
    display: flex;
    flex-direction: column;
    align-items: center;
    background-color: #f0f0f0;
}

.vs-up {
    margin-top: 18px;
}

.vs-thumb {
    width: 15px;
    height: 145px;
    margin-top: 231px;
    background-color: #c8c8c8;
}

.vs-down {
    margin-top: 75px;
}

.nav-right {
    width: 401px;
    margin-left: 15px;
    padding-left: 15px;
    display: flex;
    flex-direction: column;
    border-left: 1px solid #e6e6e6;
}

.preview-head {
    height: 34px;
    flex: none;
    display: flex;
    justify-content: space-between;
    padding: 0 1px 0 0;
}

.preview-head svg {
    margin-top: 10px;
}

.preview-head h2 {
    margin: 0;
    font-size: 17px;
    font-weight: 300;
    line-height: 28px;
    color: #555;
}

.preview {
    width: 384px;
    table-layout: fixed;
    border-collapse: collapse;
    font-size: 11px;
}

.preview th,
.preview td {
    height: 21px;
    padding: 0 3px;
    border: 1px solid #d5d5d5;
    text-align: left;
    overflow: hidden;
    white-space: nowrap;
}

.preview th {
    height: 22px;
    background-color: #f3f3f3;
    font-weight: bold;
    font-size: 11.2px;
    color: #444;
}

.preview th:first-child,
.preview td:first-child {
    border-left: none;
    padding: 0 2px 0 0;
}

.c0 { width: 19px; }
.c1 { width: 150px; }
.c2 { width: 105px; }
.c3 { width: 110px; }

.preview .nul {
    text-align: right;
    font-style: italic;
}

.hscroll {
    margin-top: auto;
    height: 17px;
    width: 385px;
    display: flex;
    align-items: center;
    background-color: #efefef;
}

.hs-left {
    margin-left: 17px;
}

.hs-thumb {
    width: 15px;
    height: 17px;
    margin-left: 45px;
    background-color: #c8c8c8;
}

.hs-right {
    margin-left: 275px;
}

.dlg-foot {
    display: flex;
    justify-content: flex-end;
    gap: 13.5px;
    padding: 30px 31px 0 0;
}

.btn {
    width: 60px;
    height: 22px;
    padding: 0;
    border: none;
    background-color: #e8e8e8;
    color: #444;
    font-family: inherit;
    font-size: 11.5px;
}

.btn-load {
    background-color: #f2c80f;
}
```
